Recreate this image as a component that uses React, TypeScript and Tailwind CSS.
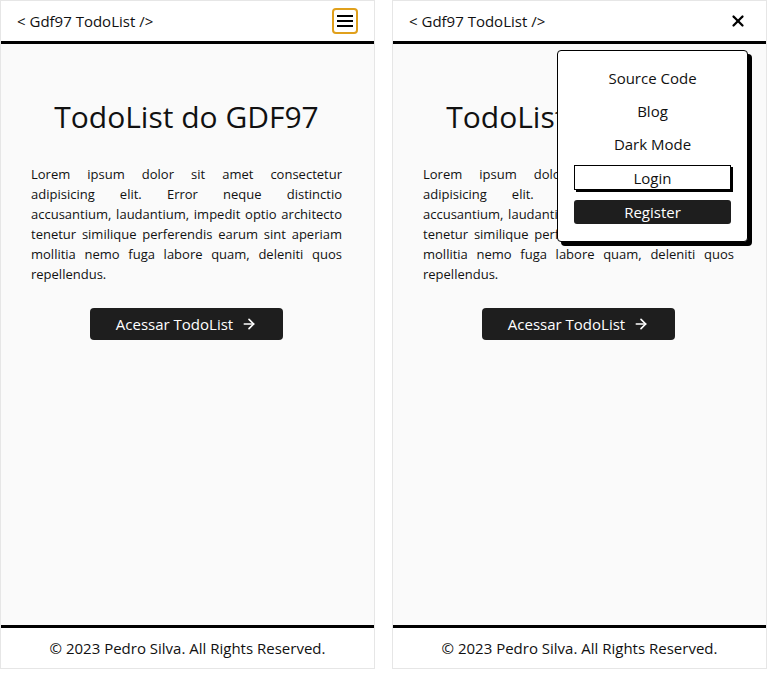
import { ArrowRight, X } from 'lucide-react'

const font = { fontFamily: '"Open Sans", "Noto Sans", sans-serif' }

// line breaks as they fall in the reference
const loremLines = [
  'Lorem ipsum dolor sit amet consectetur',
  'adipisicing elit. Error neque distinctio',
  'accusantium, laudantium, impedit optio architecto',
  'tenetur similique perferendis earum sint aperiam',
  'mollitia nemo fuga labore quam, deleniti quos',
  'repellendus.',
]

function Header({ open }: { open: boolean }) {
  return (
    <header className="flex h-[43px] items-center justify-between border-b-[3px] border-black bg-white pl-4 pr-4">
      <span className="text-[15px] text-[#111]">&lt; Gdf97 TodoList /&gt;</span>
      {open ? (
        <X className="mr-[3px] size-[18px] text-black" strokeWidth={3} />
      ) : (
        <button className="flex size-[26px] items-center justify-center rounded-[4px] border-2 border-[#e0a01c] bg-white">
          <svg width="16" height="12" viewBox="0 0 16 12">
            <rect x="0" y="0" width="16" height="2" fill="#000" />
            <rect x="0" y="5" width="16" height="2" fill="#000" />
            <rect x="0" y="10" width="16" height="2" fill="#000" />
          </svg>
        </button>
      )}
    </header>
  )
}

function Menu() {
  return (
    <div className="absolute right-[18px] top-[49px] flex w-[191px] flex-col items-center rounded-[4px] border border-black bg-white px-4 pb-[17px] pt-[15px] shadow-[4px_4px_0_#000]">
      <a className="text-[15px] leading-[24px] text-[#111]">Source Code</a>
      <a className="mt-[9px] text-[15px] leading-[24px] text-[#111]">Blog</a>
      <a className="mt-[9px] text-[15px] leading-[24px] text-[#111]">Dark Mode</a>
      <button className="mt-[9px] h-[25px] w-full border border-black bg-white text-[15px] leading-[22px] text-[#111] shadow-[2px_2px_0_#000]">
        Login
      </button>
      <button className="mt-[10px] h-[24px] w-full rounded-[3px] bg-[#1e1e1e] text-[15px] leading-[22px] text-white">
        Register
      </button>
    </div>
  )
}

function Phone({ open }: { open: boolean }) {
  return (
    <div className="relative flex h-[669px] w-[375px] shrink-0 flex-col border border-[#e6e6e6] bg-[#fafafa]" style={font}>
      <Header open={open} />
      <main className="flex flex-1 flex-col items-center pl-[30px] pr-[32px]">
        <h1 className="mt-[51px] text-[30px] leading-[44px] text-[#111]">TodoList do GDF97</h1>
        <div className="mt-[25px] w-full text-[13px] leading-[20px] text-[#111]">
          {loremLines.map((line, i) => (
            <span
              key={i}
              className={
                i < loremLines.length - 1
                  ? 'block whitespace-nowrap text-justify [text-align-last:justify]'
                  : 'block'
              }
            >
              {line}
            </span>
          ))}
        </div>
        <button className="mt-[24px] flex h-[32px] w-[193px] items-center justify-center gap-2 rounded-[4px] bg-[#1e1e1e] text-[15px] text-white">
          Acessar TodoList
          <ArrowRight className="size-[16px]" strokeWidth={2.5} />
        </button>
      </main>
      <footer className="flex h-[43px] items-center justify-center border-t-[3px] border-black bg-white text-[15px] text-[#111]">
        © 2023 Pedro Silva. All Rights Reserved.
      </footer>
      {open && <Menu />}
    </div>
  )
}

export default function App() {
  return (
    <div className="flex min-h-[682px] w-[774px] gap-[17px] bg-white">
      <Phone open={false} />
      <Phone open={true} />
    </div>
  )
}
